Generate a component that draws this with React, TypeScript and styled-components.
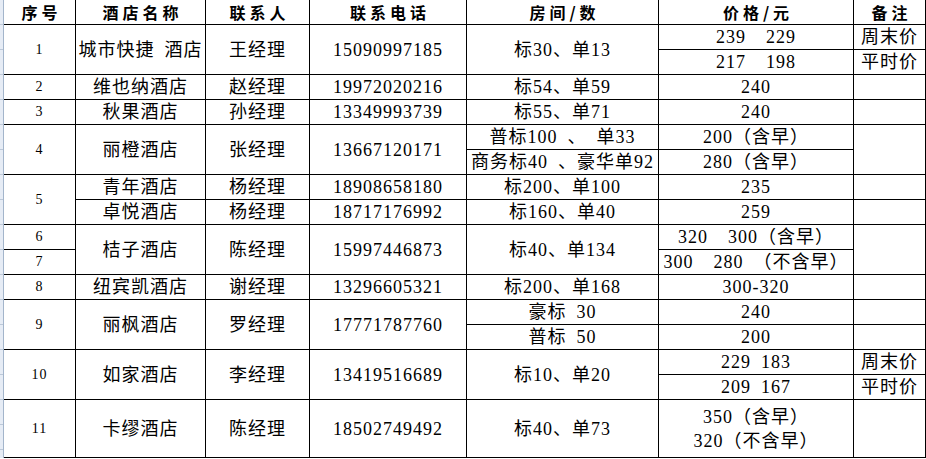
import React from 'react';
import styled, { createGlobalStyle, css } from 'styled-components';

const GlobalStyle = createGlobalStyle`
	html, body {
		margin: 0;
		padding: 0;
		background: #fff;
	}
`;

type Kind = 'head' | 'seq' | 'body';

type CellData = {
	c: number;
	r: number;
	cs?: number;
	rs?: number;
	text: string | string[];
	kind?: Kind;
};

const Sheet = styled.div`
	display: flex;
	width: 926px;
	height: 459px;
	background: #fff;
`;

// excel row header edge on the left
const Gutter = styled.div`
	width: 3px;
	height: 458px;
	border-right: 1px solid #a3b5cb;
	background: repeating-linear-gradient(
		to bottom,
		#e6ecf5 0 24px,
		#bcc8d8 24px 25px
	);
`;

const Grid = styled.div`
	display: grid;
	grid-template-columns: 71px 129px 103px 156px 191px 194px 71px;
	grid-template-rows: repeat(16, 24px) 57px;
	gap: 1px;
	padding: 0 1px 1px 0;
	background: #000;
	align-self: flex-start;
`;

const headStyle = css`
	font-family: 'Noto Sans CJK SC', sans-serif;
	font-weight: 700;
	font-size: 16px;
	letter-spacing: 4px;
	padding-left: 4px;
`;

const seqStyle = css`
	font-family: 'Liberation Serif', serif;
	font-size: 14px;
	letter-spacing: 1px;
`;

const bodyStyle = css`
	font-family: 'Liberation Serif', 'Noto Sans CJK SC', serif;
	font-size: 18px;
	letter-spacing: 1px;
`;

const Cell = styled.div<{
	$c: number;
	$r: number;
	$cs: number;
	$rs: number;
	$kind: Kind;
}>`
	grid-column: ${p => p.$c} / span ${p => p.$cs};
	grid-row: ${p => p.$r} / span ${p => p.$rs};
	background: #fff;
	color: #000;
	display: flex;
	flex-direction: column;
	align-items: center;
	justify-content: center;
	white-space: pre;
	line-height: 24px;
	overflow: hidden;
	${p =>
		p.$kind === 'head' ? headStyle : p.$kind === 'seq' ? seqStyle : bodyStyle}
`;

const Line = styled.span`
	display: block;
`;

const E = '\u2002';

const head = ['序号', '酒店名称', '联系人', '联系电话', '房间/数', '价格/元', '备注'];

// one row spanning all columns, the helper keeps the table data short
const row = (r: number, vals: string[]): CellData[] =>
	vals.map((text, i) => ({ c: i + 1, r, text, kind: i === 0 ? 'seq' : 'body' }));

const cells: CellData[] = [
	...head.map((text, i) => ({ c: i + 1, r: 1, text, kind: 'head' as Kind })),

	{ c: 1, r: 2, rs: 2, text: '1', kind: 'seq' },
	{ c: 2, r: 2, rs: 2, text: `城市快捷${E}酒店` },
	{ c: 3, r: 2, rs: 2, text: '王经理' },
	{ c: 4, r: 2, rs: 2, text: '15090997185' },
	{ c: 5, r: 2, rs: 2, text: '标30、单13' },
	{ c: 6, r: 2, text: `239${E}${E}229` },
	{ c: 6, r: 3, text: `217${E}${E}198` },
	{ c: 7, r: 2, text: '周末价' },
	{ c: 7, r: 3, text: '平时价' },

	...row(4, ['2', '维也纳酒店', '赵经理', '19972020216', '标54、单59', '240', '']),
	...row(5, ['3', '秋果酒店', '孙经理', '13349993739', '标55、单71', '240', '']),

	{ c: 1, r: 6, rs: 2, text: '4', kind: 'seq' },
	{ c: 2, r: 6, rs: 2, text: '丽橙酒店' },
	{ c: 3, r: 6, rs: 2, text: '张经理' },
	{ c: 4, r: 6, rs: 2, text: '13667120171' },
	{ c: 5, r: 6, text: `普标100${E}、${E}单33` },
	{ c: 5, r: 7, text: `商务标40${E}、豪华单92` },
	{ c: 6, r: 6, text: '200（含早）' },
	{ c: 6, r: 7, text: '280（含早）' },
	{ c: 7, r: 6, rs: 2, text: '' },

	{ c: 1, r: 8, rs: 2, text: '5', kind: 'seq' },
	{ c: 2, r: 8, text: '青年酒店' },
	{ c: 2, r: 9, text: '卓悦酒店' },
	{ c: 3, r: 8, text: '杨经理' },
	{ c: 3, r: 9, text: '杨经理' },
	{ c: 4, r: 8, text: '18908658180' },
	{ c: 4, r: 9, text: '18717176992' },
	{ c: 5, r: 8, text: '标200、单100' },
	{ c: 5, r: 9, text: '标160、单40' },
	{ c: 6, r: 8, text: '235' },
	{ c: 6, r: 9, text: '259' },
	{ c: 7, r: 8, text: '' },
	{ c: 7, r: 9, text: '' },

	{ c: 1, r: 10, text: '6', kind: 'seq' },
	{ c: 1, r: 11, text: '7', kind: 'seq' },
	{ c: 2, r: 10, rs: 2, text: '桔子酒店' },
	{ c: 3, r: 10, rs: 2, text: '陈经理' },
	{ c: 4, r: 10, rs: 2, text: '15997446873' },
	{ c: 5, r: 10, rs: 2, text: '标40、单134' },
	{ c: 6, r: 10, text: `320${E}${E}300（含早）` },
	{ c: 6, r: 11, text: `300${E}${E}280${E}（不含早）` },
	{ c: 7, r: 10, rs: 2, text: '' },

	...row(12, ['8', '纽宾凯酒店', '谢经理', '13296605321', '标200、单168', '300-320', '']),

	{ c: 1, r: 13, rs: 2, text: '9', kind: 'seq' },
	{ c: 2, r: 13, rs: 2, text: '丽枫酒店' },
	{ c: 3, r: 13, rs: 2, text: '罗经理' },
	{ c: 4, r: 13, rs: 2, text: '17771787760' },
	{ c: 5, r: 13, text: `豪标${E}30` },
	{ c: 5, r: 14, text: `普标${E}50` },
	{ c: 6, r: 13, text: '240' },
	{ c: 6, r: 14, text: '200' },
	{ c: 7, r: 13, text: '' },
	{ c: 7, r: 14, text: '' },

	{ c: 1, r: 15, rs: 2, text: '10', kind: 'seq' },
	{ c: 2, r: 15, rs: 2, text: '如家酒店' },
	{ c: 3, r: 15, rs: 2, text: '李经理' },
	{ c: 4, r: 15, rs: 2, text: '13419516689' },
	{ c: 5, r: 15, rs: 2, text: '标10、单20' },
	{ c: 6, r: 15, text: `229${E}183` },
	{ c: 6, r: 16, text: `209${E}167` },
	{ c: 7, r: 15, text: '周末价' },
	{ c: 7, r: 16, text: '平时价' },

	{ c: 1, r: 17, text: '11', kind: 'seq' },
	{ c: 2, r: 17, text: '卡缪酒店' },
	{ c: 3, r: 17, text: '陈经理' },
	{ c: 4, r: 17, text: '18502749492' },
	{ c: 5, r: 17, text: '标40、单73' },
	{ c: 6, r: 17, text: ['350（含早）', '320（不含早）'] },
	{ c: 7, r: 17, text: '' },
];

export default function App() {
	return (
		<>
			<GlobalStyle />
			<Sheet>
				<Gutter />
				<Grid>
					{cells.map(({ c, r, cs = 1, rs = 1, text, kind = 'body' }) => (
						<Cell key={`${c}-${r}`} $c={c} $r={r} $cs={cs} $rs={rs} $kind={kind}>
							{Array.isArray(text)
								? text.map(t => <Line key={t}>{t}</Line>)
								: text}
						</Cell>
					))}
				</Grid>
			</Sheet>
		</>
	);
}
